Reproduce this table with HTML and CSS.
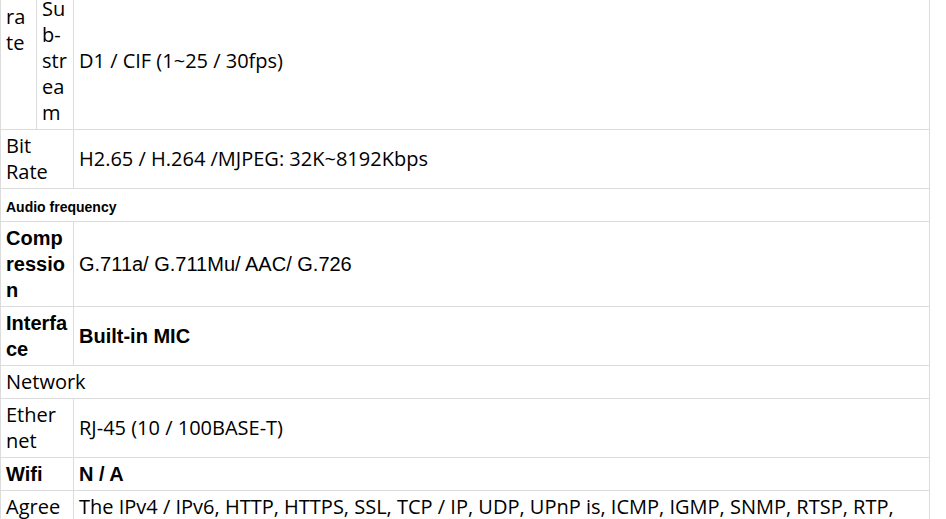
FILE: index.html
```html
<!DOCTYPE html>
<html lang="en">
<head>
    <meta charset="UTF-8">
    <meta name="viewport" content="width=device-width, initial-scale=1.0">
    <title>Specifications</title>
    <link rel="stylesheet" href="styles.css">
</head>
<body>
    <table class="spec-table">
        <colgroup>
            <col class="col-a">
            <col class="col-b">
            <col>
        </colgroup>
        <tbody>
            <tr>
                <td class="top-cell">rate</td>
                <td>Sub-stream</td>
                <td>D1 / CIF (1~25 / 30fps)</td>
            </tr>
            <tr>
                <td colspan="2">Bit Rate</td>
                <td>H2.65 / H.264 /MJPEG: 32K~8192Kbps</td>
            </tr>
            <tr>
                <td colspan="3" class="bold section"><span class="small">Audio frequency</span></td>
            </tr>
            <tr>
                <td colspan="2" class="bold">Compression</td>
                <td class="arial">G.711a/ G.711Mu/ AAC/ G.726</td>
            </tr>
            <tr>
                <td colspan="2" class="bold">Interface</td>
                <td class="bold">Built-in MIC</td>
            </tr>
            <tr>
                <td colspan="3">Network</td>
            </tr>
            <tr>
                <td colspan="2">Ethernet</td>
                <td>RJ-45 (10 / 100BASE-T)</td>
            </tr>
            <tr>
                <td colspan="2" class="bold">Wifi</td>
                <td class="bold">N / A</td>
            </tr>
            <tr>
                <td colspan="2">Agreement</td>
                <td>The IPv4 / IPv6, HTTP, HTTPS, SSL, TCP / IP, UDP, UPnP is, ICMP, IGMP, SNMP, RTSP, RTP, SMTP, NTP, DHCP, DNS, PPPOE, DDNS, FTP, IP Filter, QoS, Bonjour</td>
            </tr>
        </tbody>
    </table>
</body>
</html>
```

FILE: styles.css
```css
/* Page */
body {
    margin: 0;
    background-color: #ffffff;
    color: #000000;
    font-family: "Open Sans", sans-serif;
}

/* Spec table, scrolled a little so the first row is cut off */
.spec-table {
    width: 930px;
    margin-top: -8px;
    border-collapse: collapse;
    table-layout: fixed;
}

.col-a {
    width: 36px;
}

.col-b {
    width: 37px;
}

.spec-table td {
    border: 1px solid #dcdcdc;
    padding: 3px 5px;
    font-size: 20px;
    line-height: 26px;
    vertical-align: middle;
    overflow-wrap: anywhere;
}

.spec-table td.top-cell {
    vertical-align: top;
    padding-top: 11px;
}

.spec-table td.section {
    padding-top: 5px;
    padding-bottom: 1px;
}

.bold {
    font-family: "Liberation Sans", Arial, sans-serif;
    font-weight: bold;
}

.arial {
    font-family: "Liberation Sans", Arial, sans-serif;
}

.small {
    display: block;
    font-size: 14px;
    line-height: 26px;
}
```
